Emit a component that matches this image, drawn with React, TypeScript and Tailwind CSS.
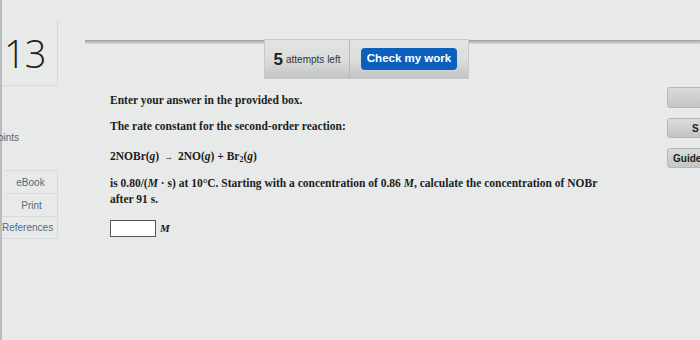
import React from "react";

const serif = { fontFamily: '"Liberation Serif", "Times New Roman", serif' };

export default function App() {
  return (
    <div
      className="w-[700px] h-[340px] overflow-hidden bg-[#e7eae9] relative flex"
      style={{ fontFamily: '"Liberation Sans", Arial, sans-serif' }}
    >
      {/* left edge */}
      <div className="w-[2px] h-full bg-[#b9bcbb]" />
      {/* left column */}
      <div className="w-[56px] flex flex-col">
        <div className="h-[20px]" />
        <div className="h-[66px] border-r border-b border-[#d6d9d8] flex items-center pl-[2px]">
          <span className="text-[38px] leading-none text-[#1c1c1c] tracking-[-1px]" style={{ fontFamily: '"Open Sans", sans-serif', fontWeight: 300 }}>13</span>
        </div>
        <div className="h-[47px]" />
        <div className="text-[10px] text-[#5a6470] -ml-[4px] leading-none">oints</div>
        <div className="h-[27px]" />
        <div className="flex flex-col text-[10px] text-[#4f6a86]">
          <div className="h-[23px] border-t border-r border-[#d6d9d8] flex items-center justify-center ml-[2px]">eBook</div>
          <div className="h-[23px] border-t border-r border-[#d6d9d8] flex items-center justify-center ml-[4px]">Print</div>
          <div className="h-[23px] border-t border-b border-r border-[#d6d9d8] flex items-center justify-start">References</div>
        </div>
      </div>
      {/* main */}
      <div className="flex-1 flex flex-col">
        <div className="h-[40px]" />
        <div className="flex ml-[27px]">
          <div className="w-[179px] h-[4px] bg-gradient-to-b from-[#9da0a0] to-[#d8dbda]" />
          <div className="h-[40px] w-[205px] flex border border-[#c6c9c8] bg-gradient-to-b from-[#e2e4e3] via-[#dcdedd] to-[#c3c5c4] -mt-[1px]">
            <div className="w-[85px] border-r border-[#b8bbba] flex items-center justify-center gap-[3px] text-[#222]">
              <span className="text-[17px] font-bold leading-none">5</span>
              <span className="text-[10px] leading-none mt-[2px] text-[#333]">attempts left</span>
            </div>
            <div className="flex-1 flex items-center justify-center">
              <div className="h-[22px] w-[96px] rounded-[4px] bg-[#0b5fbd] text-white text-[11.5px] font-bold flex items-center justify-center">Check my work</div>
            </div>
          </div>
          <div className="flex-1 h-[4px] bg-gradient-to-b from-[#9da0a0] to-[#d8dbda]" />
        </div>
        <div className="flex">
          <div className="flex flex-col ml-[52px] text-[#1d1d1d] font-bold text-[11.5px] leading-none" style={serif}>
            <div className="h-[16px]" />
            <div>Enter your answer in the provided box.</div>
            <div className="h-[14px]" />
            <div>The rate constant for the second-order reaction:</div>
            <div className="h-[19px]" />
            <div>
              2NOBr(<i>g</i>) <span className="font-normal text-[9px] mx-[2px]">→</span> 2NO(<i>g</i>) + Br<sub className="text-[8px]">2</sub>(<i>g</i>)
            </div>
            <div className="h-[12px]" />
            <div className="leading-[16px]">
              is 0.80/(<i>M</i> · s) at 10°C. Starting with a concentration of 0.86 <i>M</i>, calculate the concentration of NOBr
              <br />
              after 91 s.
            </div>
            <div className="h-[13px]" />
            <div className="flex items-center gap-[4px]">
              <div className="w-[46px] h-[17px] border border-[#555] bg-white" />
              <i className="text-[11px]">M</i>
            </div>
          </div>
        </div>
      </div>
      {/* right buttons */}
      <div className="absolute left-[667px] top-[87px] flex flex-col gap-[10px]">
        <div className="w-[50px] h-[21px] rounded-[3px] border border-[#b5b8b7] bg-gradient-to-b from-[#dadcdb] to-[#c4c6c5]" />
        <div className="w-[50px] h-[20px] rounded-[3px] border border-[#b5b8b7] bg-gradient-to-b from-[#dadcdb] to-[#c4c6c5] text-[10px] font-bold text-[#222] flex items-center pl-[24px]">S</div>
        <div className="w-[50px] h-[20px] rounded-[3px] border border-[#b5b8b7] bg-gradient-to-b from-[#dadcdb] to-[#c4c6c5] text-[10px] font-bold text-[#222] flex items-center pl-[5px]">Guide</div>
      </div>
    </div>
  );
}
